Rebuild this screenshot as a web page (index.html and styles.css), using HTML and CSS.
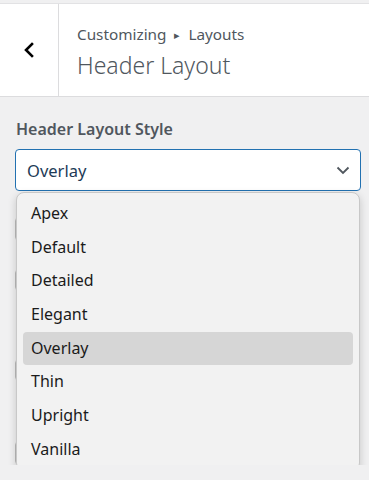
FILE: index.html
```html
<!DOCTYPE html>
<html lang="en">
<head>
  <meta charset="UTF-8" />
  <meta name="viewport" content="width=device-width, initial-scale=1" />
  <title>Header Layout</title>
  <link rel="stylesheet" href="styles.css">
</head>
<body>

  <div class="topbar"></div>

  <header class="section-head">
    <button class="back-btn" aria-label="Back">
      <svg width="12" height="16" viewBox="0 0 12 16" aria-hidden="true">
        <path d="M9 2 L3 8 L9 14" fill="none" stroke="#000" stroke-width="2.6" stroke-linecap="square" />
      </svg>
    </button>
    <div class="head-text">
      <div class="crumbs">Customizing <span class="sep">&#9656;</span> Layouts</div>
      <h1>Header Layout</h1>
    </div>
  </header>

  <main class="panel">
    <label class="field-label" for="layoutStyle">Header Layout Style</label>
    <div class="select-wrap">
      <div class="select-box" id="layoutStyle">
        <span>Overlay</span>
        <svg width="14" height="9" viewBox="0 0 14 9" aria-hidden="true">
          <path d="M1.5 1.5 L7 7 L12.5 1.5" fill="none" stroke="#50575e" stroke-width="1.8" />
        </svg>
      </div>

      <ul class="dropdown" role="listbox">
        <li>Apex</li>
        <li>Default</li>
        <li>Detailed</li>
        <li>Elegant</li>
        <li class="active">Overlay</li>
        <li>Thin</li>
        <li>Upright</li>
        <li>Vanilla</li>
      </ul>
    </div>

    <div class="behind">
      <div class="ghost g1"></div>
      <div class="ghost g2"></div>
      <div class="ghost g3"></div>
      <div class="ghost g4"></div>
    </div>
  </main>

</body>
</html>
```

FILE: styles.css
```css
* {
  box-sizing: border-box;
}
body {
  margin: 0;
  background: #f0f0f1;
  font-family: 'Noto Sans', 'Open Sans', sans-serif;
  color: #50575e;
  overflow: hidden;
}
.topbar {
  height: 4px;
  background: #f0f0f1;
  border-bottom: 1px solid #e2e2e4;
}
.section-head {
  display: flex;
  background: #fff;
  height: 93px;
  border-bottom: 1px solid #dcdcde;
}
.back-btn {
  width: 59px;
  border: none;
  border-right: 1px solid #dcdcde;
  background: #fff;
  display: flex;
  align-items: center;
  justify-content: center;
  padding: 0;
}
.head-text {
  padding: 20px 0 0 18px;
}
.crumbs {
  font-size: 15.3px;
  line-height: 20px;
  color: #50575e;
}
.crumbs .sep {
  font-size: 11px;
  margin: 0 4px;
  position: relative;
  top: -1px;
}
h1 {
  margin: 3px 0 0;
  font-size: 23px;
  font-weight: 300;
  line-height: 32px;
  color: #50575e;
}
.panel {
  padding: 21px 8px 0 15px;
}
.field-label {
  display: block;
  font-size: 16px;
  font-weight: 600;
  line-height: 22px;
  margin: 0 0 9px 1px;
  color: #50575e;
}
.select-wrap {
  position: relative;
}
.select-box {
  height: 42px;
  background: #fff;
  border: 1px solid #2271b1;
  border-radius: 4px;
  display: flex;
  align-items: center;
  justify-content: space-between;
  padding: 0 10px 0 11px;
  font-size: 16.5px;
  color: #1d3b57;
}
.dropdown {
  position: absolute;
  top: 43px;
  left: 1px;
  width: 344px;
  height: 279px;
  margin: 0;
  padding: 4px 6px;
  list-style: none;
  background: #f2f2f2;
  border: 1px solid #c8c8c8;
  border-radius: 8px;
  box-shadow: 0 3px 8px rgb(0 0 0 / 0.18);
  z-index: 2;
}
.dropdown li {
  height: 33.7px;
  line-height: 33.7px;
  padding-left: 8px;
  font-size: 16px;
  color: #1b1b1b;
  border-radius: 4px;
}
.dropdown li.active {
  background: #d6d6d6;
}
.behind {
  display: flex;
  flex-direction: column;
}
.ghost {
  width: 30px;
  border: 1px solid #bbb;
  border-radius: 4px;
  background: #fff;
}
.g1 { height: 24px; margin-top: 26px; }
.g2 { height: 22px; margin-top: 28px; }
.g3 { height: 22px; margin-top: 68px; }
.g4 { height: 24px; margin-top: 60px; }
```
